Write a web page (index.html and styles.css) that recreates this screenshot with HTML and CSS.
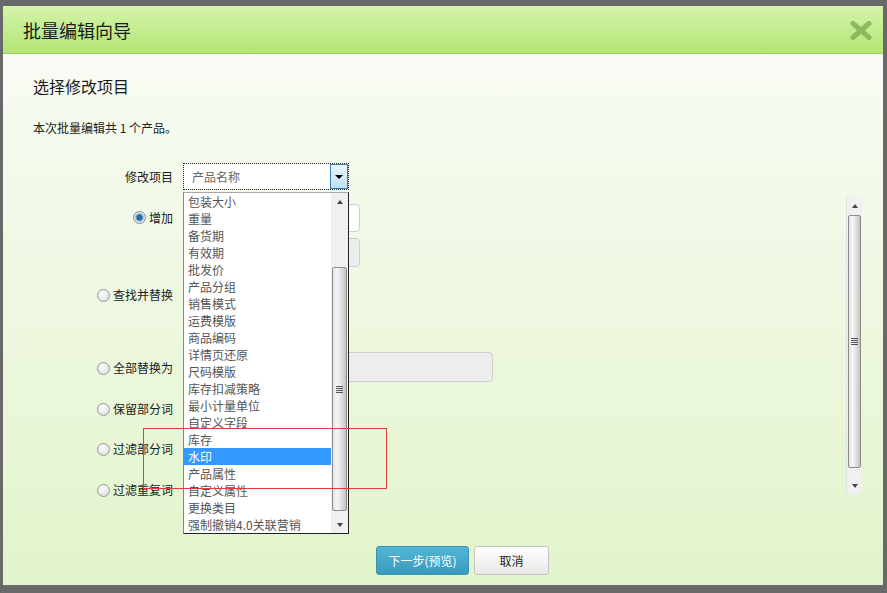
FILE: index.html
```html
<!DOCTYPE html>
<html lang="zh">
<head>
<meta charset="utf-8">
<title>批量编辑向导</title>
<link rel="stylesheet" href="styles.css">
</head>
<body>
<div class="dialog">
  <div class="titlebar">
    <span class="title">批量编辑向导</span>
    <svg class="close" width="22" height="19" viewBox="0 0 22 19"><path d="M3 2.5 L19 16.5 M19 2.5 L3 16.5" stroke="#8cba5c" stroke-width="5" stroke-linecap="round"/></svg>
  </div>
  <div class="body">
    <h2 class="heading">选择修改项目</h2>
    <p class="summary">本次批量编辑共 1 个产品。</p>
    <div class="editor">
      <div class="fields">
        <div class="row row-select">
          <div class="label">修改项目</div>
          <div class="select-wrap">
            <div class="select"><span class="select-text">产品名称</span><span class="select-btn"><span class="tri-down dark"></span></span></div>
            <div class="listbox">
              <ul class="options">
                <li>包装大小</li><li>重量</li><li>备货期</li><li>有效期</li><li>批发价</li>
                <li>产品分组</li><li>销售模式</li><li>运费模版</li><li>商品编码</li><li>详情页还原</li>
                <li>尺码模版</li><li>库存扣减策略</li><li>最小计量单位</li><li>自定义字段</li><li>库存</li>
                <li class="selected">水印</li><li>产品属性</li><li>自定义属性</li><li>更换类目</li><li>强制撤销4.0关联营销</li>
              </ul>
              <div class="sb small">
                <div class="sb-btn"><span class="tri-up"></span></div>
                <div class="sb-track"><div class="sb-thumb list-thumb"><span class="grip"></span></div></div>
                <div class="sb-btn"><span class="tri-down"></span></div>
              </div>
            </div>
          </div>
        </div>
        <div class="row row-add">
          <div class="label"><span class="radio checked"></span>增加</div>
          <div class="inputs">
            <span class="input white add-input"></span>
            <span class="input grey add-input"></span>
          </div>
        </div>
        <div class="row row-find">
          <div class="label"><span class="radio"></span>查找并替换</div>
        </div>
        <div class="row row-replace">
          <div class="label"><span class="radio"></span>全部替换为</div>
          <span class="input grey replace-input"></span>
        </div>
        <div class="row row-keep">
          <div class="label"><span class="radio"></span>保留部分词</div>
        </div>
        <div class="row row-filter">
          <div class="label"><span class="radio"></span>过滤部分词</div>
        </div>
        <div class="row row-dedupe">
          <div class="label"><span class="radio"></span>过滤重复词</div>
        </div>
      </div>
      <div class="sb big">
        <div class="sb-btn"><span class="tri-up"></span></div>
        <div class="sb-track"><div class="sb-thumb big-thumb"><span class="grip"></span></div></div>
        <div class="sb-btn"><span class="tri-down"></span></div>
      </div>
    </div>
    <div class="footer">
      <button class="btn btn-primary">下一步(预览)</button>
      <button class="btn btn-default">取消</button>
    </div>
    <div class="mark-box"></div>
  </div>
</div>
</body>
</html>
```

FILE: styles.css
```css
html, body {
  margin: 0;
  padding: 0;
}
body {
  width: 887px;
  height: 593px;
  overflow: hidden;
  background: #696969;
  font-family: "Liberation Sans", "Noto Sans CJK SC", sans-serif;
  font-size: 12px;
  color: #222;
}
.dialog {
  margin: 6px 0 0 3px;
  width: 880px;
  height: 579px;
  display: flex;
  flex-direction: column;
}
.titlebar {
  height: 47px;
  border-bottom: 1px solid #9dcf60;
  background: linear-gradient(#d4f4ab, #b4e575);
  display: flex;
  align-items: center;
  justify-content: space-between;
  padding: 0 11px 0 20px;
}
.title {
  font-family: "Noto Sans CJK SC", sans-serif;
  font-size: 18px;
  line-height: 24px;
  color: #1a1a1a;
}
.close {
  display: block;
  margin-top: 1px;
}
.body {
  flex: 1;
  position: relative;
  display: flex;
  flex-direction: column;
  background: linear-gradient(#f8fbf4, #e2f4cb);
}
.heading {
  margin: 22px 0 0 30px;
  font-family: "Noto Sans CJK SC", sans-serif;
  font-weight: normal;
  font-size: 16px;
  line-height: 20px;
  color: #1a1a1a;
}
.summary {
  margin: 24px 0 0 30px;
  font-family: "Noto Sans CJK SC", sans-serif;
  font-size: 12px;
  line-height: 16px;
}
.editor {
  display: flex;
  margin-top: 27px;
}
.fields {
  flex: 1;
}
.row {
  display: flex;
  align-items: flex-start;
}
.label {
  width: 140px;
  margin-left: 30px;
  margin-right: 10px;
  display: flex;
  justify-content: flex-end;
  align-items: center;
  font-family: "Noto Sans CJK SC", sans-serif;
  font-size: 12px;
  height: 20px;
  line-height: 20px;
  color: #1a1a1a;
}
.row-select .label { height: 27px; }
.row-add { margin-top: 14px; }
.row-add .label { height: 27px; }
.row-find { margin-top: 18px; }
.row-replace { margin-top: 47px; }
.row-replace .label { height: 32px; }
.row-keep { margin-top: 15px; }
.row-filter { margin-top: 20px; }
.row-dedupe { margin-top: 21px; }

.radio {
  width: 11px;
  height: 11px;
  border: 1px solid #9a9a9a;
  border-radius: 50%;
  background: radial-gradient(circle at 40% 35%, #ffffff, #d6d6d6);
  margin-right: 3px;
  flex: none;
  box-sizing: content-box;
}
.radio.checked {
  border-color: #8a8a8a;
  background: radial-gradient(circle, #2a78b8 0, #1b5d98 2.5px, #88b8dc 3.5px, #e4ecf2 5px);
}

.select-wrap {
  position: relative;
  z-index: 2;
}
.select {
  width: 164px;
  height: 25px;
  border: 1px dotted #222;
  background: #fff;
  display: flex;
  align-items: stretch;
}
.select-text {
  flex: 1;
  padding-left: 8px;
  font-family: "Noto Sans CJK SC", sans-serif;
  font-size: 12px;
  line-height: 25px;
  color: #666;
}
.select-btn {
  width: 16px;
  border: 1px solid #3c7fb1;
  background: linear-gradient(#eaf6fd, #bfe0f5);
  display: flex;
  align-items: center;
  justify-content: center;
}
.listbox {
  position: absolute;
  left: 0;
  top: 29px;
  width: 164px;
  height: 340px;
  border: 1px solid #222;
  border-left-color: #888;
  border-top-color: #aaa;
  background: #fff;
  display: flex;
}
.options {
  list-style: none;
  margin: 0;
  padding: 0;
  width: 147px;
}
.options li {
  height: 17px;
  line-height: 17px;
  padding-left: 4px;
  font-family: "Noto Sans CJK SC", sans-serif;
  font-size: 12px;
  color: #555;
  white-space: nowrap;
}
.options li.selected {
  background: #3399ff;
  color: #fff;
}

.sb {
  display: flex;
  flex-direction: column;
  background: #f0f0f0;
}
.sb.small {
  width: 17px;
  height: 340px;
}
.sb.big {
  width: 15px;
  height: 297px;
  margin-top: 34px;
  margin-right: 21px;
  border-left: 1px solid #e2e2e2;
}
.sb-btn {
  height: 17px;
  display: flex;
  align-items: center;
  justify-content: center;
  flex: none;
}
.sb-track {
  flex: 1;
  display: flex;
  flex-direction: column;
}
.sb-thumb {
  margin: 0 1px;
  border: 1px solid #8c8c8c;
  border-radius: 2px;
  background: linear-gradient(to right, #e2e2e2, #f6f6f6 30%, #dcdcdc 70%, #c2c2c2);
  display: flex;
  align-items: center;
  justify-content: center;
}
.list-thumb {
  margin-top: 57px;
  height: 242px;
}
.big-thumb {
  margin-top: 1px;
  height: 251px;
}
.grip {
  width: 7px;
  height: 7px;
  background: repeating-linear-gradient(#555 0, #555 1px, transparent 1px, transparent 2px);
}
.tri-up, .tri-down {
  width: 0;
  height: 0;
  border-left: 3.5px solid transparent;
  border-right: 3.5px solid transparent;
}
.tri-up { border-bottom: 4px solid #444; }
.tri-down { border-top: 4px solid #444; }
.tri-down.dark {
  border-left-width: 4px;
  border-right-width: 4px;
  border-top: 4px solid #000;
}

.inputs {
  display: flex;
  flex-direction: column;
  gap: 6px;
}
.input {
  display: block;
  border: 1px solid #cfcfcf;
  border-radius: 4px;
  box-sizing: border-box;
}
.input.white { background: #fff; }
.input.grey { background: #ededed; }
.add-input {
  width: 177px;
  height: 28px;
}
.add-input.grey { height: 29px; }
.replace-input {
  width: 310px;
  height: 30px;
  margin-top: 0;
}

.footer {
  margin-top: auto;
  padding: 0 0 10px 373px;
  display: flex;
  gap: 5px;
}
.btn {
  height: 29px;
  border-radius: 3px;
  font-family: "Noto Sans CJK SC", sans-serif;
  font-size: 12px;
  padding: 0;
  cursor: pointer;
}
.btn-primary {
  width: 93px;
  border: 1px solid #3a93b4;
  background: linear-gradient(#53b6d7, #3a9abd);
  color: #fff;
}
.btn-default {
  width: 75px;
  border: 1px solid #c4c4c4;
  background: linear-gradient(#ffffff, #e8e8e8);
  color: #222;
}
.mark-box {
  position: absolute;
  left: 140px;
  top: 374px;
  width: 244px;
  height: 61px;
  border: 1px solid #e03c3c;
  box-sizing: border-box;
  z-index: 3;
}
```
